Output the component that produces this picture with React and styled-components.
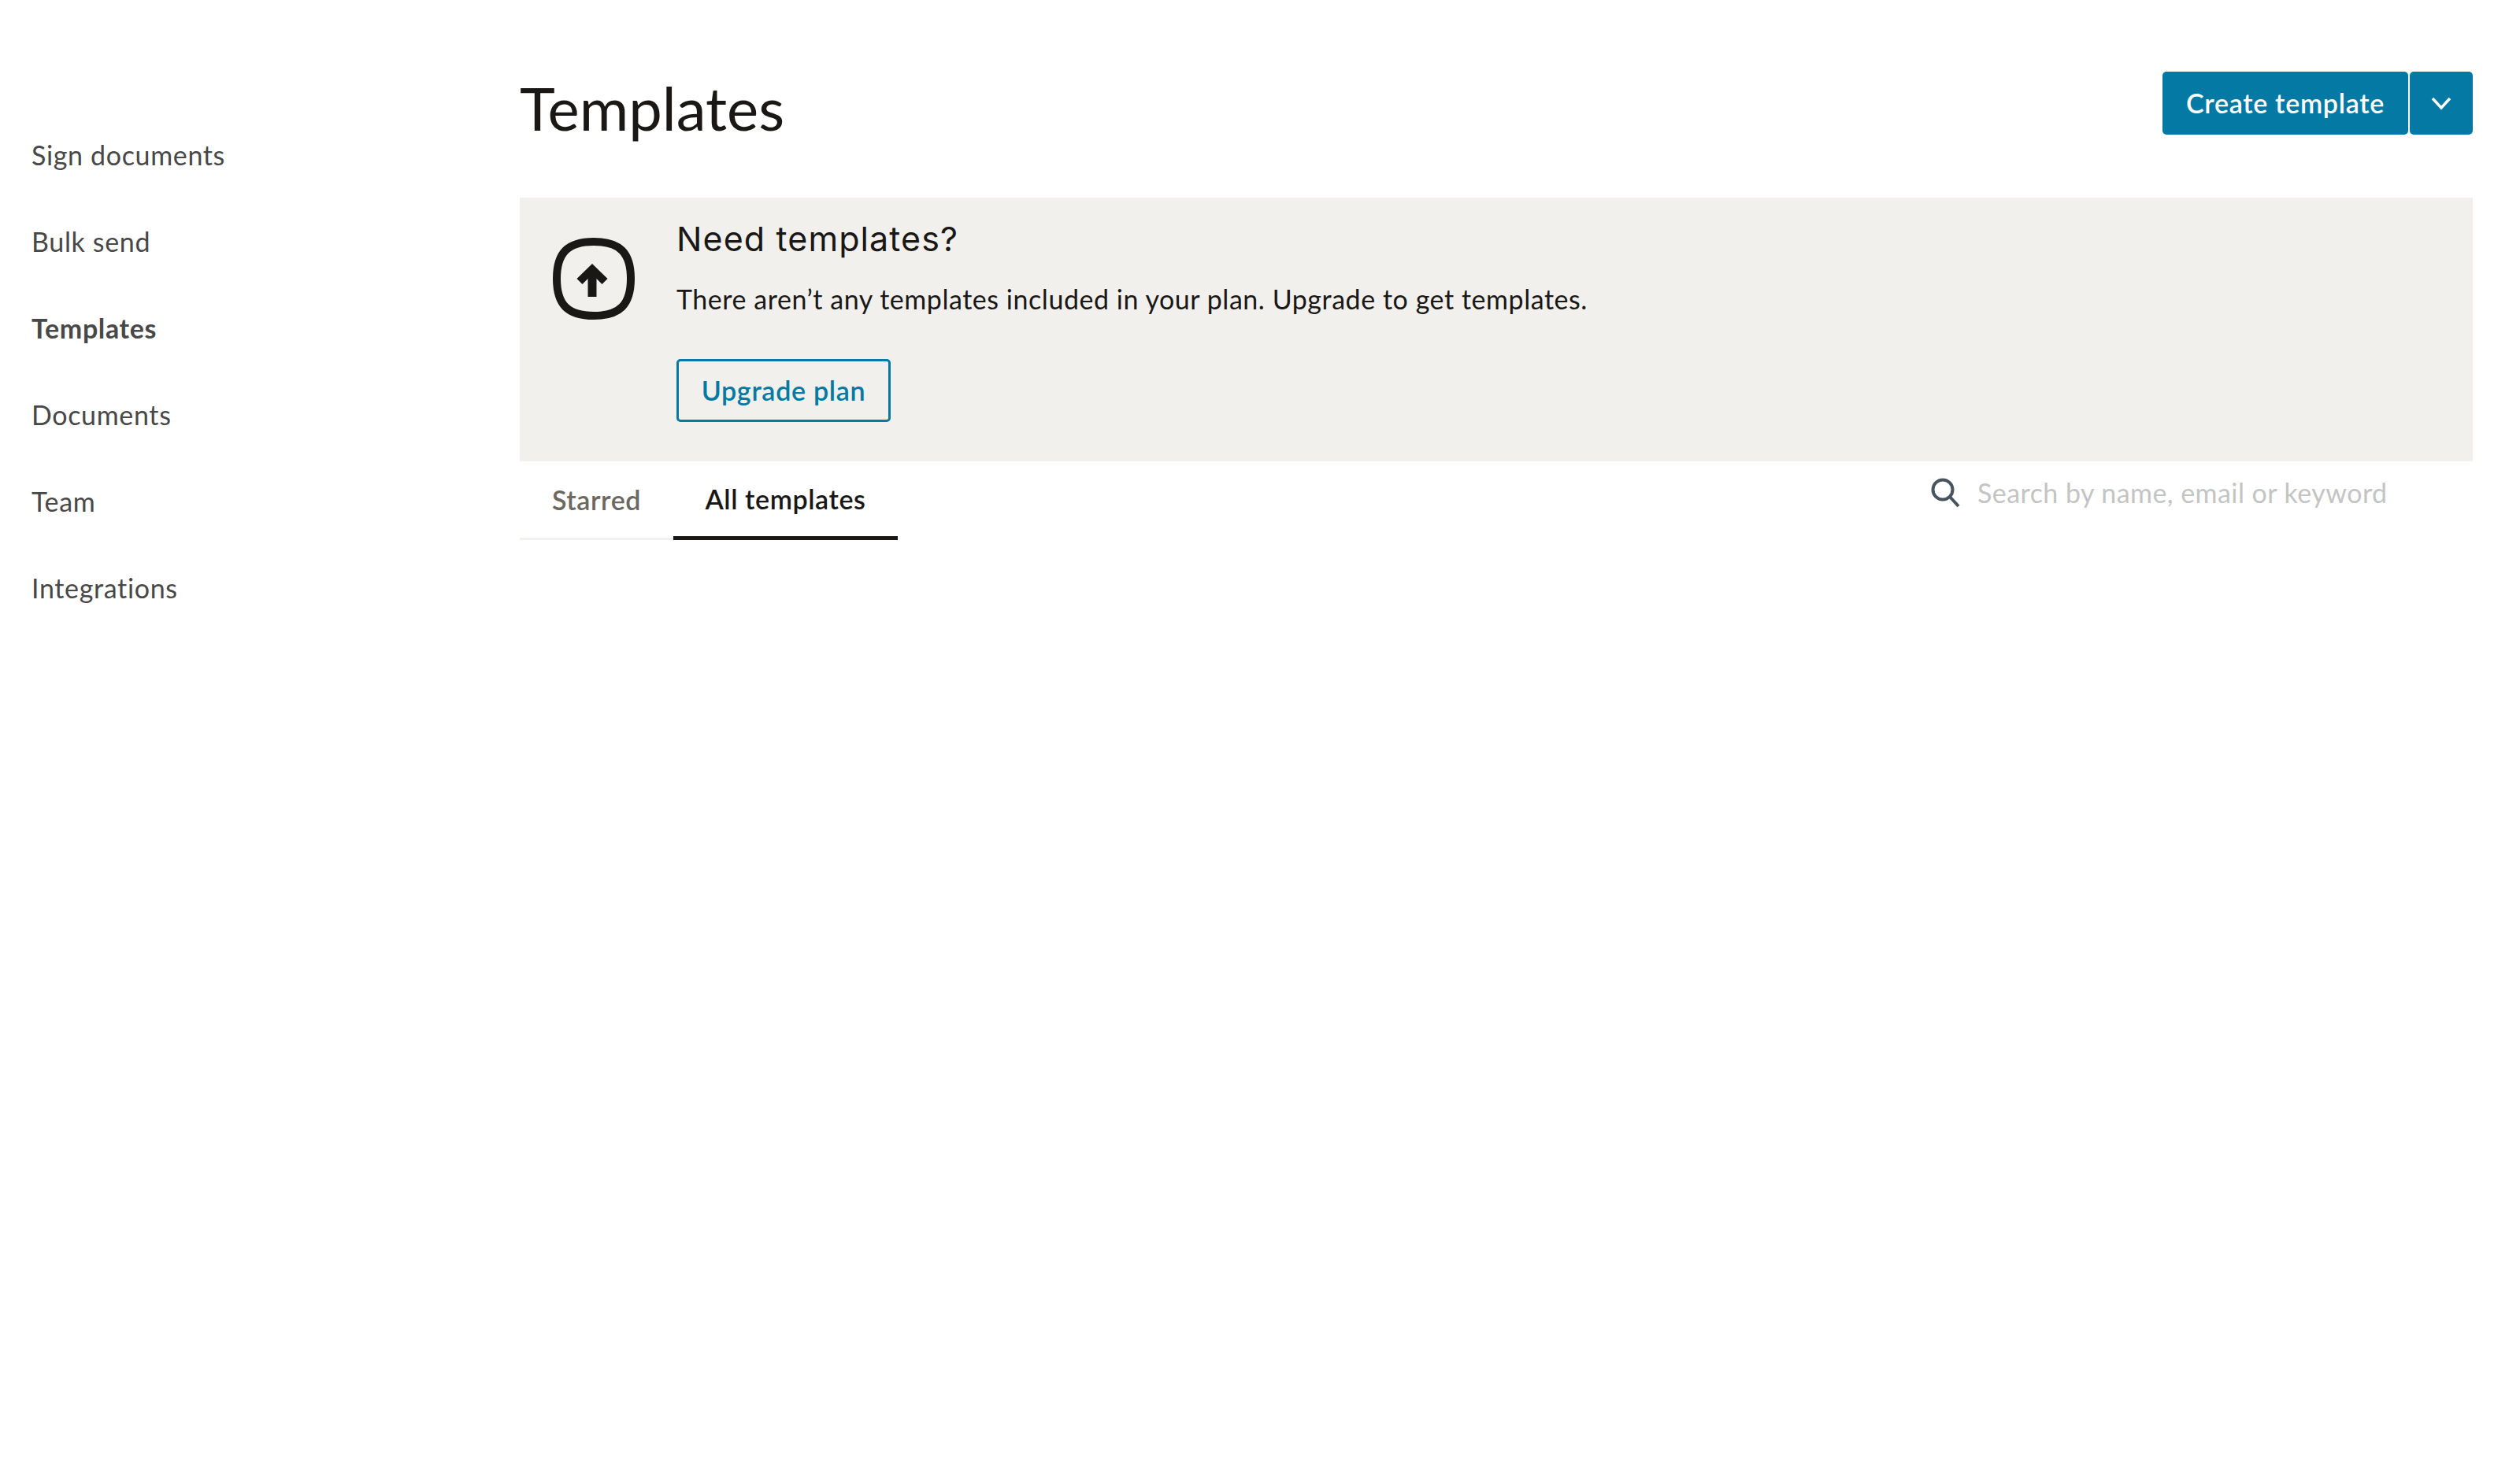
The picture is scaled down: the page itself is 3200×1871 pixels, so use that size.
import React from "react";
import styled, { createGlobalStyle } from "styled-components";

const Global = createGlobalStyle`
  html, body { margin: 0; padding: 0; background: #fff; }
  body { font-family: "Lato", "Liberation Sans", sans-serif; color: #1a1816; }
  * { box-sizing: border-box; }
`;

const Page = styled.div`
  display: flex;
  min-height: 1871px;
  background: #fff;
`;

const Sidebar = styled.nav`
  width: 660px;
  flex: none;
  padding: 141px 0 0 40px;
  display: flex;
  flex-direction: column;
`;

const NavItem = styled.a`
  height: 110px;
  display: flex;
  align-items: center;
  font-size: 34px;
  letter-spacing: 0.65px;
  color: #484848;
  font-weight: ${(p) => (p.$active ? 700 : 400)};
`;

const Main = styled.main`
  flex: 1;
  padding: 91px 60px 0 0;
  display: flex;
  flex-direction: column;
`;

const Header = styled.header`
  display: flex;
  justify-content: space-between;
  align-items: flex-start;
  height: 160px;
`;

const Title = styled.h1`
  margin: -2px 0 0;
  font-size: 76px;
  font-weight: 400;
  line-height: 96px;
  color: #1a1816;
`;

const Actions = styled.div`
  display: flex;
  gap: 2px;
`;

const Primary = styled.button`
  height: 80px;
  width: ${(p) => p.$width}px;
  padding: 0 0 2px;
  border: 0;
  border-radius: 5px;
  background: #0379a3;
  color: #fff;
  font: 600 34px "Lato", sans-serif;
  letter-spacing: 0.7px;
  display: flex;
  align-items: center;
  justify-content: center;
`;

const Chevron = styled.svg`
  width: 28px;
  height: 18px;
  margin-top: 2px;
`;

const Banner = styled.section`
  height: 335px;
  background: #f1f0ec;
  display: flex;
  padding: 51px 0 0 42px;
`;

const BannerIcon = styled.svg`
  width: 104px;
  height: 104px;
  flex: none;
  margin-right: 53px;
`;

const BannerBody = styled.div`
  display: flex;
  flex-direction: column;
  align-items: flex-start;
  margin-top: -26px;
`;

const BannerTitle = styled.h2`
  margin: 0;
  font-family: "Inter", sans-serif;
  font-size: 43px;
  font-weight: 400;
  letter-spacing: 1.1px;
  line-height: 54px;
  color: #1a1816;
`;

const BannerText = styled.p`
  margin: 28px 0 0;
  font-size: 34px;
  letter-spacing: 0.54px;
  line-height: 44px;
  color: #1a1816;
`;

const Outline = styled.button`
  margin-top: 54px;
  width: 272px;
  height: 80px;
  padding: 0 0 2px;
  background: transparent;
  border: 3px solid #0379a3;
  border-radius: 5px;
  color: #0379a3;
  font: 600 34px "Lato", sans-serif;
  letter-spacing: 0.7px;
`;

const TabRow = styled.div`
  display: flex;
  justify-content: space-between;
  align-items: flex-start;
`;

const Tabs = styled.div`
  display: flex;
`;

const Tab = styled.a`
  height: 100px;
  width: ${(p) => p.$width}px;
  display: flex;
  align-items: center;
  justify-content: center;
  font-size: 34px;
  letter-spacing: 0.6px;
  font-weight: 600;
  color: ${(p) => (p.$active ? "#1a1816" : "#6c675f")};
  border-bottom: ${(p) => (p.$active ? "5px solid #1a1816" : "3px solid #f1f0ec")};
`;

const Search = styled.label`
  display: flex;
  align-items: center;
  gap: 22px;
  margin-top: 19px;
  width: 688px;
`;

const SearchInput = styled.input`
  flex: 1;
  min-width: 0;
  border: 0;
  padding: 0;
  outline: 0;
  background: transparent;
  font: 400 34px "Lato", sans-serif;
  letter-spacing: 0.45px;
  &::placeholder { color: #c4c4c4; opacity: 1; }
`;

export default function App() {
  return (
    <>
      <Global />
      <Page>
        <Sidebar>
          <NavItem>Sign documents</NavItem>
          <NavItem>Bulk send</NavItem>
          <NavItem $active>Templates</NavItem>
          <NavItem>Documents</NavItem>
          <NavItem>Team</NavItem>
          <NavItem>Integrations</NavItem>
        </Sidebar>
        <Main>
          <Header>
            <Title>Templates</Title>
            <Actions>
              <Primary $width={312}>Create template</Primary>
              <Primary $width={80} aria-label="More">
                <Chevron viewBox="0 0 28 18" fill="none">
                  <path d="M3 3l11 12L25 3" stroke="#fff" strokeWidth="3.5" />
                </Chevron>
              </Primary>
            </Actions>
          </Header>
          <Banner>
            <BannerIcon viewBox="0 0 104 104" fill="none">
              <path
                d="M52 5C85 5 99 19 99 52S85 99 52 99 5 85 5 52 19 5 52 5Z"
                stroke="#1a1816"
                strokeWidth="10"
              />
              <polygon
                points="50,33 69.5,52 62.5,59 55.5,52 55.5,75 44.5,75 44.5,52 37.5,59 30.5,52"
                fill="#1a1816"
              />
            </BannerIcon>
            <BannerBody>
              <BannerTitle>Need templates?</BannerTitle>
              <BannerText>
                There aren’t any templates included in your plan. Upgrade to get templates.
              </BannerText>
              <Outline>Upgrade plan</Outline>
            </BannerBody>
          </Banner>
          <TabRow>
            <Tabs>
              <Tab $width={195}>Starred</Tab>
              <Tab $width={285} $active>All templates</Tab>
            </Tabs>
            <Search>
              <svg width="37" height="37" viewBox="0 0 37 37" fill="none">
                <circle cx="15" cy="15" r="12.5" stroke="#4a545e" strokeWidth="4" />
                <path d="M24 24l11 12" stroke="#4a545e" strokeWidth="4" />
              </svg>
              <SearchInput placeholder="Search by name, email or keyword" />
            </Search>
          </TabRow>
        </Main>
      </Page>
    </>
  );
}
